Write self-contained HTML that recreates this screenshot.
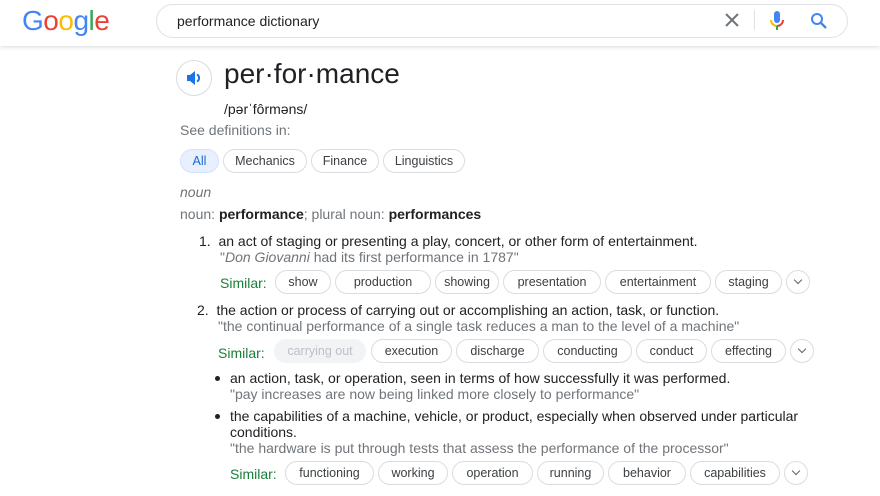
<!DOCTYPE html>
<html><head><meta charset="utf-8"><style>
*{margin:0;padding:0;box-sizing:border-box}
body{width:880px;height:496px;overflow:hidden;background:#fff;font-family:"Liberation Sans",Arial,sans-serif;color:#202124;position:relative}
.a{position:absolute;white-space:nowrap}
.hdr{position:absolute;left:0;top:0;width:880px;height:46px;background:#fff;box-shadow:0 1px 4px rgba(0,0,0,.15)}
.sb{position:absolute;left:156px;top:4px;width:692px;height:34px;border:1px solid #dfe1e5;border-radius:17px}
.c{position:absolute;height:24px;border:1px solid #dadce0;border-radius:12px;font-size:12.5px;line-height:22px;text-align:center;color:#3c4043;background:#fff}
.t{font-size:14px;color:#202124}
.q{font-size:14px;color:#70757a}
.s{font-size:14px;color:#188038}
.ch{position:absolute;width:24px;height:24px;border:1px solid #dadce0;border-radius:12px}
.ch:after{content:"";position:absolute;left:8px;top:6px;width:5px;height:5px;border-right:1.5px solid #5f6368;border-bottom:1.5px solid #5f6368;transform:rotate(45deg)}
</style></head><body>
<div class="hdr"></div>
<div class="a" style="left:22px;top:5px;font-size:28px;letter-spacing:-0.5px;font-family:'Liberation Sans',sans-serif"><span style="color:#4285f4">G</span><span style="color:#ea4335">o</span><span style="color:#fbbc05">o</span><span style="color:#4285f4">g</span><span style="color:#34a853">l</span><span style="color:#ea4335">e</span></div>
<div class="sb"></div>
<div class="a" style="left:177px;top:13px;font-size:14px">performance dictionary</div>
<svg class="a" style="left:724px;top:12px" width="16" height="16" viewBox="0 0 16 16"><path d="M2 2L14 14M14 2L2 14" stroke="#70757a" stroke-width="2"/></svg>
<div class="a" style="left:754px;top:10px;width:1px;height:20px;background:#dfe1e5"></div>
<svg class="a" style="left:769px;top:10px" width="16" height="22" viewBox="0 0 16 22"><rect x="5" y="1" width="6" height="12" rx="3" fill="#4285f4"/><path d="M2 10a6 6 0 0 0 6 6" stroke="#fbbc05" stroke-width="2" fill="none"/><path d="M14 10a6 6 0 0 1-6 6" stroke="#ea4335" stroke-width="2" fill="none"/><rect x="7" y="16" width="2" height="4" fill="#34a853"/></svg>
<svg class="a" style="left:810px;top:12px" width="18" height="18" viewBox="0 0 18 18"><circle cx="7" cy="7" r="5" stroke="#4285f4" stroke-width="2" fill="none"/><path d="M10.5 10.5L16 16" stroke="#4285f4" stroke-width="2.4"/></svg>

<div class="a" style="left:176px;top:60px;width:36px;height:36px;border:1px solid #dadce0;border-radius:18px"></div>
<svg class="a" style="left:185px;top:69px" width="18" height="18" viewBox="0 0 18 18"><path d="M2 6h3l5-4v14l-5-4H2z" fill="#1a73e8"/><path d="M12 5.5a4 4 0 0 1 0 7" stroke="#1a73e8" stroke-width="2" fill="none"/></svg>
<div class="a" style="left:224px;top:58px;font-size:28px;color:#202124">per·for·mance</div>
<div class="a" style="left:224px;top:101px;font-size:14px">/pərˈfôrməns/</div>
<div class="a" style="left:180px;top:122px;font-size:14px;color:#70757a">See definitions in:</div>
<div class="c" style="left:180px;top:149px;width:39px;background:#e8f0fe;border-color:#d2e3fc;color:#1967d2">All</div>
<div class="c" style="left:223px;top:149px;width:84px">Mechanics</div>
<div class="c" style="left:311px;top:149px;width:68px">Finance</div>
<div class="c" style="left:383px;top:149px;width:82px">Linguistics</div>
<div class="a" style="left:180px;top:184px;font-size:14px;font-style:italic;color:#70757a">noun</div>
<div class="a" style="left:180px;top:206px;font-size:14px;color:#70757a">noun: <b style="color:#202124">performance</b>; plural noun: <b style="color:#202124">performances</b></div>

<div class="a t" style="left:199px;top:233px">1.&nbsp; an act of staging or presenting a play, concert, or other form of entertainment.</div>
<div class="a q" style="left:220px;top:249px">"<i>Don Giovanni</i> had its first performance in 1787"</div>
<div class="a s" style="left:220px;top:275px">Similar:</div>
<div class="c" style="left:275px;top:270px;width:56px">show</div>
<div class="c" style="left:335px;top:270px;width:96px">production</div>
<div class="c" style="left:435px;top:270px;width:64px">showing</div>
<div class="c" style="left:503px;top:270px;width:98px">presentation</div>
<div class="c" style="left:605px;top:270px;width:106px">entertainment</div>
<div class="c" style="left:715px;top:270px;width:67px">staging</div>
<div class="ch" style="left:786px;top:270px"></div>

<div class="a t" style="left:197px;top:302px">2.&nbsp; the action or process of carrying out or accomplishing an action, task, or function.</div>
<div class="a q" style="left:218px;top:318px">"the continual performance of a single task reduces a man to the level of a machine"</div>
<div class="a s" style="left:218px;top:345px">Similar:</div>
<div class="c" style="left:274px;top:339px;width:92px;background:#f1f3f4;border-color:#f1f3f4;color:#bdc1c6">carrying out</div>
<div class="c" style="left:371px;top:339px;width:81px">execution</div>
<div class="c" style="left:456px;top:339px;width:83px">discharge</div>
<div class="c" style="left:543px;top:339px;width:89px">conducting</div>
<div class="c" style="left:636px;top:339px;width:71px">conduct</div>
<div class="c" style="left:711px;top:339px;width:75px">effecting</div>
<div class="ch" style="left:790px;top:339px"></div>

<div class="a" style="left:215px;top:376px;width:5px;height:5px;border-radius:3px;background:#202124"></div>
<div class="a t" style="left:230px;top:370px">an action, task, or operation, seen in terms of how successfully it was performed.</div>
<div class="a q" style="left:230px;top:386px">"pay increases are now being linked more closely to performance"</div>
<div class="a" style="left:215px;top:414px;width:5px;height:5px;border-radius:3px;background:#202124"></div>
<div class="a t" style="left:230px;top:408px">the capabilities of a machine, vehicle, or product, especially when observed under particular</div>
<div class="a t" style="left:230px;top:424px">conditions.</div>
<div class="a q" style="left:230px;top:440px">"the hardware is put through tests that assess the performance of the processor"</div>
<div class="a s" style="left:230px;top:466px">Similar:</div>
<div class="c" style="left:285px;top:461px;width:89px">functioning</div>
<div class="c" style="left:378px;top:461px;width:70px">working</div>
<div class="c" style="left:452px;top:461px;width:81px">operation</div>
<div class="c" style="left:537px;top:461px;width:67px">running</div>
<div class="c" style="left:608px;top:461px;width:78px">behavior</div>
<div class="c" style="left:690px;top:461px;width:90px">capabilities</div>
<div class="ch" style="left:784px;top:461px"></div>
</body></html>
